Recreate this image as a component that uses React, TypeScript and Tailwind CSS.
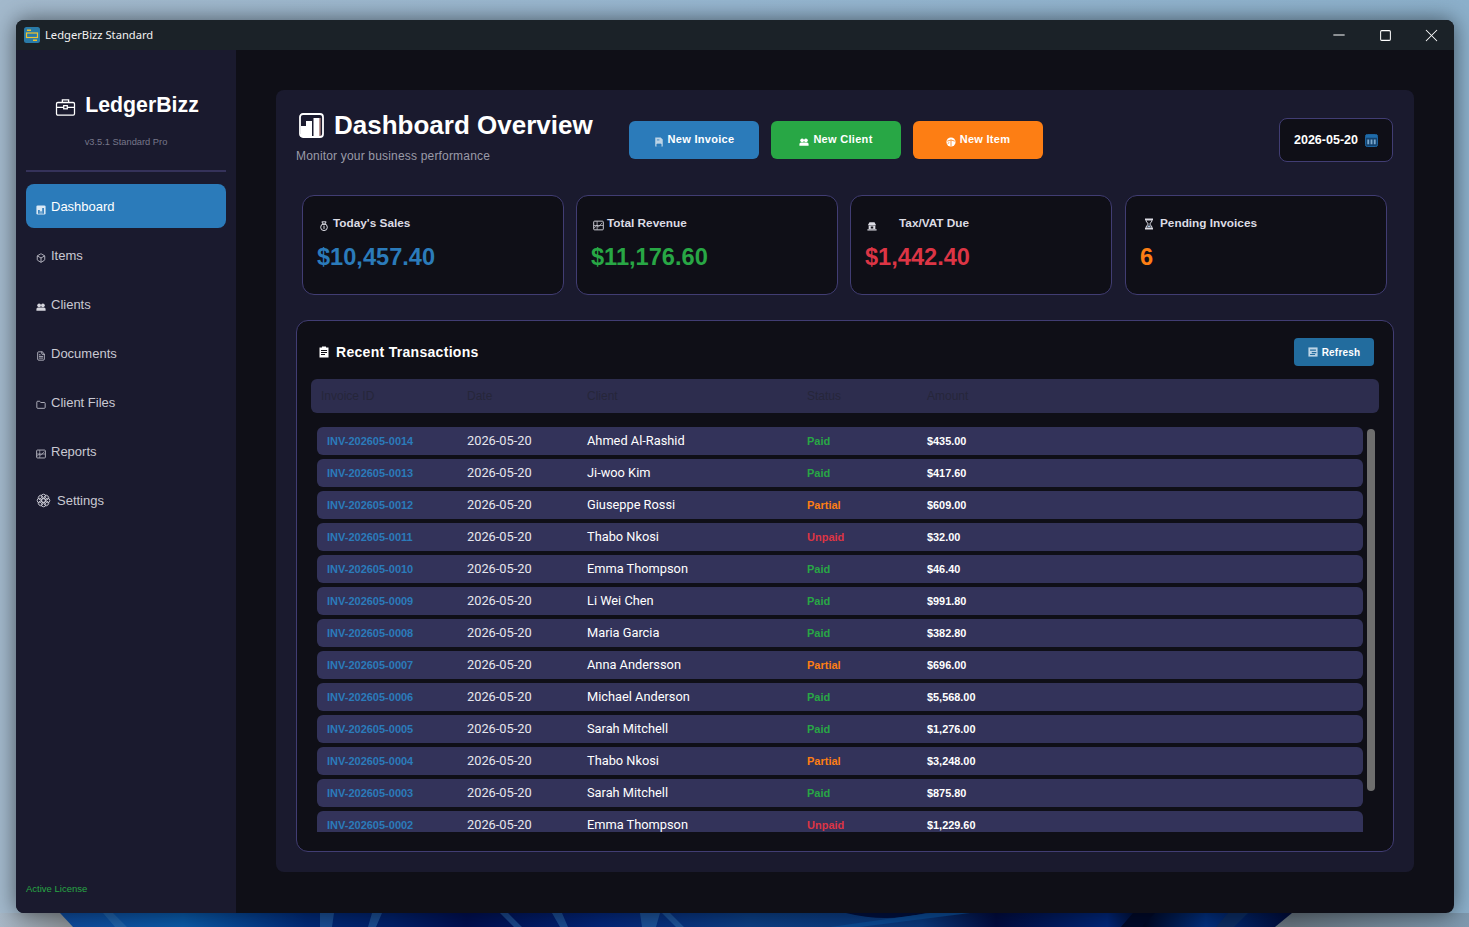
import { Box, FileText, Folder, Minus, Square, X } from "lucide-react";

const sans = "font-['Liberation_Sans',Arial,sans-serif]";
const ui = "font-['Roboto',sans-serif]";

const transactions = [
  ["INV-202605-0014", "Ahmed Al-Rashid", "Paid", "$435.00"],
  ["INV-202605-0013", "Ji-woo Kim", "Paid", "$417.60"],
  ["INV-202605-0012", "Giuseppe Rossi", "Partial", "$609.00"],
  ["INV-202605-0011", "Thabo Nkosi", "Unpaid", "$32.00"],
  ["INV-202605-0010", "Emma Thompson", "Paid", "$46.40"],
  ["INV-202605-0009", "Li Wei Chen", "Paid", "$991.80"],
  ["INV-202605-0008", "Maria Garcia", "Paid", "$382.80"],
  ["INV-202605-0007", "Anna Andersson", "Partial", "$696.00"],
  ["INV-202605-0006", "Michael Anderson", "Paid", "$5,568.00"],
  ["INV-202605-0005", "Sarah Mitchell", "Paid", "$1,276.00"],
  ["INV-202605-0004", "Thabo Nkosi", "Partial", "$3,248.00"],
  ["INV-202605-0003", "Sarah Mitchell", "Paid", "$875.80"],
  ["INV-202605-0002", "Emma Thompson", "Unpaid", "$1,229.60"],
];

const statusColor: Record<string, string> = {
  Paid: "text-[#28a745]",
  Partial: "text-[#fd7e14]",
  Unpaid: "text-[#dc3545]",
};

function BarsIcon({ className }: { className?: string }) {
  return (
    <svg viewBox="0 0 24 24" className={className}>
      <rect x="1" y="1" width="22" height="22" rx="3" fill="#dbe9f5" />
      <path d="M5 12h4v9H5zM10.5 15h3v6h-3zM15 7h4v14h-4z" fill="#2b7bba" />
    </svg>
  );
}

function TitleIcon() {
  return (
    <svg viewBox="0 0 25 25" className="h-[25px] w-[25px] shrink-0">
      <rect x="1" y="1" width="23" height="23" rx="3" fill="#1a1a2e" stroke="#fff" strokeWidth="1.8" />
      <path d="M2 13h5V8h6v15H2zM14.5 5h6v18h-6z" fill="#fff" />
      <path d="M20.5 5h1v18h-1z" fill="#e8a79a" />
    </svg>
  );
}

function Briefcase() {
  return (
    <svg viewBox="0 0 22 20" fill="none" stroke="#fff" strokeWidth="1.4" className="h-[18px] w-[21px]">
      <rect x="1" y="5" width="20" height="14" rx="1.5" />
      <path d="M7.5 5V2h7v3M1 10.5h20" />
      <rect x="9" y="8.5" width="4" height="3.5" fill="#1a1a2e" />
    </svg>
  );
}

function Flower() {
  const petals = [0, 45, 90, 135, 180, 225, 270, 315];
  return (
    <svg viewBox="0 0 24 24" fill="none" stroke="#c9c9d2" strokeWidth="1.5" className="h-[15px] w-[15px] shrink-0">
      <circle cx="12" cy="12" r="3.2" />
      {petals.map((a) => (
        <circle key={a} cx="12" cy="5.5" r="3.6" transform={`rotate(${a} 12 12)`} />
      ))}
    </svg>
  );
}

function ChartIcon({ className, stroke }: { className?: string; stroke: string }) {
  return (
    <svg viewBox="0 0 24 24" fill="none" stroke={stroke} strokeWidth="2" className={className}>
      <rect x="1.5" y="2.5" width="21" height="19" rx="2" />
      <path d="M2 18l6-6 4 3 8-9M2 12h20M9 3v18" strokeWidth="1.5" />
    </svg>
  );
}

function People({ className, fill }: { className?: string; fill: string }) {
  return (
    <svg viewBox="0 0 24 24" fill={fill} className={className}>
      <circle cx="7.5" cy="8" r="4.5" />
      <circle cx="16.5" cy="8" r="4.5" />
      <path d="M1 21v-4q0-4 4-4h14q4 0 4 4v4z" />
    </svg>
  );
}

function DocFilled({ className, fill, line }: { className?: string; fill: string; line: string }) {
  return (
    <svg viewBox="0 0 24 24" className={className}>
      <path d="M3 1h13l5 5v17H3z" fill={fill} />
      <path d="M7 7h6M7 17h10v6H7z" stroke={line} strokeWidth="2" fill={line} />
    </svg>
  );
}

function MoneyBag({ className }: { className?: string }) {
  return (
    <svg viewBox="0 0 24 24" fill="none" stroke="#dcdce4" strokeWidth="2.4" className={className}>
      <path d="M7 2h10l-3 6h-4z" />
      <circle cx="12" cy="15" r="8" />
      <path d="M12 11v8" />
    </svg>
  );
}

function Bank({ className }: { className?: string }) {
  return (
    <svg viewBox="0 0 24 24" fill="#dcdce4" className={className}>
      <path d="M6 3h12l4 7H2z" />
      <path d="M4 11h16v8H4z" />
      <path d="M1 20h22v3H1z" />
      <path d="M9 13h6v5H9z" fill="#0f0f17" />
    </svg>
  );
}

function HourglassSolid({ className }: { className?: string }) {
  return (
    <svg viewBox="0 0 20 24" className={className}>
      <path d="M2 1h16v3H2zM2 20h16v3H2z" fill="#dcdce4" />
      <path d="M4 4h12v2l-4.5 6 4.5 6v2H4v-2l4.5-6L4 6z" fill="none" stroke="#dcdce4" strokeWidth="2" />
      <path d="M6 18l4-4 4 4z" fill="#a9c4e0" />
    </svg>
  );
}

function Clipboard({ className }: { className?: string }) {
  return (
    <svg viewBox="0 0 24 24" className={className}>
      <path d="M3 3h18v20H3z" fill="#fff" />
      <path d="M8 1h8v4H8z" fill="#fff" />
      <path d="M6 8h12v2H6zM6 12h12v2H6zM6 16h8v2H6z" fill="#0f0f17" />
    </svg>
  );
}

function RefreshBox({ className }: { className?: string }) {
  return (
    <svg viewBox="0 0 24 24" className={className}>
      <rect x="1" y="1" width="22" height="22" fill="#bcd4e6" />
      <path d="M5 6h14v3H5zM9 12h11v3H9zM5 17h12v2H5z" fill="#226c9e" />
    </svg>
  );
}

function ItemBall({ className }: { className?: string }) {
  return (
    <svg viewBox="0 0 24 24" className={className}>
      <circle cx="12" cy="12" r="11" fill="#fff" />
      <path d="M3 10l9-3 9 3M12 7v15M8 13l-4 3" stroke="#fd7e14" strokeWidth="2" fill="none" />
    </svg>
  );
}

function CalendarSolid({ className }: { className?: string }) {
  return (
    <svg viewBox="0 0 14 14" className={className}>
      <rect x="0.5" y="0.5" width="13" height="13" rx="2" fill="#14426e" stroke="#1f6cab" />
      <path d="M1 1h12v3H1z" fill="#1f6cab" />
      <path d="M2.5 6h2v5h-2zM6 6h2v5H6zM9.5 6h2v5h-2z" fill="#7aa7cc" />
    </svg>
  );
}

function NavItem({ label, icon, active }: { label: string; icon: React.ReactNode; active?: boolean }) {
  return (
    <div
      className={`flex h-[44px] items-center rounded-[8px] pl-[10px] ${
        active ? "bg-[#2b7bba] text-white" : "text-[#c9c9d2]"
      }`}
    >
      {icon}
      <span className="ml-[5px] text-[13px] leading-none">{label}</span>
    </div>
  );
}

function Stat({
  label,
  value,
  color,
  icon,
  gap,
  extra = "",
}: {
  label: string;
  value: string;
  color: string;
  icon: React.ReactNode;
  gap: string;
  extra?: string;
}) {
  return (
    <div className={`h-[100px] rounded-[12px] border border-[#413d73] bg-[#0f0f17] pl-[14px] pt-[20px] ${extra}`}>
      <div className="flex h-[16px] items-center pl-[2px]">
        {icon}
        <span className={`${gap} text-[11.8px] font-bold text-[#dcdce4]`}>{label}</span>
      </div>
      <div className={`mt-[9px] text-[23.6px] font-bold leading-[32px] ${color}`}>{value}</div>
    </div>
  );
}

function ActionButton({ label, bg, icon }: { label: string; bg: string; icon: React.ReactNode }) {
  return (
    <div className={`flex h-[38px] w-[130px] items-center justify-center gap-[4px] rounded-[6px] ${bg}`}>
      {icon}
      <span className="mb-[1px] text-[11px] font-bold tracking-[0.3px] text-white">{label}</span>
    </div>
  );
}

export default function App() {
  return (
    <div className={`relative h-[927px] w-[1469px] overflow-hidden bg-[linear-gradient(90deg,#a3b9cc_0%,#96b6d0_50%,#8cb0cb_100%)] ${sans}`}>
      {/* wallpaper showing under the window */}
      <svg viewBox="0 0 1469 14" className="absolute bottom-0 left-0 h-[14px] w-[1469px]">
        <defs>
          <linearGradient id="base" x1="0" x2="1469" y1="0" y2="0" gradientUnits="userSpaceOnUse">
            <stop offset="0" stopColor="#a7b7c6" />
            <stop offset="0.045" stopColor="#8d949a" />
            <stop offset="0.88" stopColor="#66747f" />
            <stop offset="1" stopColor="#7f9ab0" />
          </linearGradient>
          <linearGradient id="wall" x1="60" x2="1292" y1="0" y2="0" gradientUnits="userSpaceOnUse">
            <stop offset="0" stopColor="#0e4a9c" />
            <stop offset="0.1" stopColor="#0a5aa8" />
            <stop offset="0.2" stopColor="#012a78" />
            <stop offset="0.27" stopColor="#01206a" />
            <stop offset="0.33" stopColor="#000f50" />
            <stop offset="0.44" stopColor="#03267a" />
            <stop offset="0.56" stopColor="#0c3f85" />
            <stop offset="0.7" stopColor="#0a387c" />
            <stop offset="0.76" stopColor="#020c40" />
            <stop offset="0.85" stopColor="#00277a" />
            <stop offset="0.88" stopColor="#000824" />
            <stop offset="0.93" stopColor="#023080" />
            <stop offset="1" stopColor="#010b38" />
          </linearGradient>
        </defs>
        <path d="M0 0h1469v14H0z" fill="url(#base)" />
        <path d="M60 0H1292L1275 14H73z" fill="url(#wall)" />
        <path d="M103 0h10l14 14h-12zM320 0h14l-2 14h-12zM372 0h10l-6 14h-8zM500 0h8l14 14h-8zM552 0h10l6 14h-8zM640 0h20l-4 14h-14zM662 0h8l14 14h-8z" fill="#2f6fae" opacity="0.55" />
        <path d="M846 0q40 10 80 0z" fill="#02103f" />
        <path d="M930 0h40L860 14h-30z" fill="#0b4a94" />
        <path d="M1133 0h22l-14 14h-20z" fill="#000a2a" />
        <path d="M1228 0h20l-14 14h-18z" fill="#0b2c63" />
      </svg>

      <div className="pl-[16px] pt-[20px]">
        <div className="relative flex h-[893px] w-[1438px] flex-col overflow-hidden rounded-[8px] bg-[#0f0f17] shadow-[0_0_22px_rgba(0,0,0,0.55)]">
          {/* title bar */}
          <div className="flex h-[30px] shrink-0 items-center bg-[#1b2228] pl-[8px]">
            <svg viewBox="0 0 16 16" className="h-[16px] w-[16px]">
              <rect width="16" height="16" rx="2.5" fill="#2a7ba8" />
              <path d="M3 2.5h4v1.5H3zM9 12.5h4V14H9z" fill="#f0c32e" />
              <rect x="2.5" y="6" width="11" height="4.5" fill="none" stroke="#f0c32e" strokeWidth="1.2" />
            </svg>
            <span className="ml-[5px] font-['Noto_Sans',sans-serif] text-[11.2px] text-[#f2f2f2]">LedgerBizz Standard</span>
            <div className="ml-auto flex h-full items-center text-white">
              <div className="flex w-[46px] justify-center"><Minus size={18} strokeWidth={1.33} /></div>
              <div className="flex w-[46px] justify-center"><Square size={13} strokeWidth={1.9} /></div>
              <div className="flex w-[46px] justify-center"><X size={21} strokeWidth={1.15} /></div>
            </div>
          </div>

          <div className="flex min-h-0 flex-1">
            {/* sidebar */}
            <aside className="flex w-[220px] shrink-0 flex-col bg-[#1a1a2e] px-[10px]">
              <div className="mt-[42px] flex h-[26px] items-center justify-center gap-[9px] pl-[2px]">
                <span className="mt-[4px]"><Briefcase /></span>
                <span className="mb-[-2px] text-[21.3px] font-bold leading-none text-white">LedgerBizz</span>
              </div>
              <div className="mt-[18px] text-center text-[9.3px] leading-[12px] text-[#77778a]">v3.5.1 Standard Pro</div>
              <div className="mt-[22px] h-[2px] bg-[#35325a]" />
              <nav className="mt-[12px] flex flex-col gap-[5px]">
                <NavItem active label="Dashboard" icon={<BarsIcon className="mt-[7px] h-[10px] w-[10px] shrink-0" />} />
                <NavItem label="Items" icon={<Box className="mt-[6px] h-[10px] w-[10px] shrink-0" strokeWidth={2} />} />
                <NavItem label="Clients" icon={<People fill="#d6d6de" className="mt-[6px] h-[10px] w-[10px] shrink-0" />} />
                <NavItem label="Documents" icon={<FileText className="mt-[6px] h-[10px] w-[10px] shrink-0" strokeWidth={2} />} />
                <NavItem label="Client Files" icon={<Folder className="mt-[6px] h-[10px] w-[10px] shrink-0" strokeWidth={2} />} />
                <NavItem label="Reports" icon={<ChartIcon stroke="#c9c9d2" className="mt-[6px] h-[10px] w-[10px] shrink-0" />} />
                <div className="flex h-[44px] items-center gap-[6px] pl-[10px] text-[#c9c9d2]">
                  <Flower />
                  <span className="text-[13px] leading-none">Settings</span>
                </div>
              </nav>
              <div className="mt-auto pb-[18px] text-[9.5px] leading-[12px] text-[#28a745]">Active License</div>
            </aside>

            {/* main */}
            <main className="min-w-0 flex-1 p-[40px]">
              <div className="h-[782px] w-[1138px] rounded-[8px] bg-[#1a1a2e] pl-[20px] pr-[20px] pt-[18px]">
                <div className="flex h-[87px] items-start">
                  <div className="w-[333px] shrink-0">
                    <div className="flex h-[34px] items-center gap-[10px] pl-[3px]">
                      <TitleIcon />
                      <h1 className="text-[26px] font-bold leading-none text-white">Dashboard Overview</h1>
                    </div>
                    <p className="mt-[6px] text-[12px] leading-[16px] tracking-[0.18px] text-[#9a9aa8]">Monitor your business performance</p>
                  </div>
                  <div className="mt-[13px] flex gap-[12px]">
                    <ActionButton label="New Invoice" bg="bg-[#2b7bba]" icon={<DocFilled fill="#bcd4e6" line="#2b7bba" className="mt-[3px] h-[10px] w-[10px]" />} />
                    <ActionButton label="New Client" bg="bg-[#28a745]" icon={<People fill="#ffffff" className="mt-[3px] h-[10px] w-[10px]" />} />
                    <ActionButton label="New Item" bg="bg-[#fd7e14]" icon={<ItemBall className="mt-[3px] h-[10px] w-[10px]" />} />
                  </div>
                  <div className="ml-auto mr-px mt-[10px] flex h-[44px] w-[114px] items-center justify-center gap-[7px] rounded-[8px] border border-[#413d73] bg-[#0f0f17]">
                    <span className="text-[12.5px] font-bold text-white">2026-05-20</span>
                    <CalendarSolid className="h-[13px] w-[13px]" />
                  </div>
                </div>

                <div className="ml-[6px] grid w-[1085px] grid-cols-[262px_262px_262px_263px] gap-3">
                  <Stat label="Today's Sales" value="$10,457.40" color="text-[#2b7bba]" gap="ml-[4px]" icon={<MoneyBag className="mt-[3px] h-[10px] w-[10px]" />} />
                  <Stat label="Total Revenue" value="$11,176.60" color="text-[#28a745]" gap="ml-[3px]" icon={<ChartIcon stroke="#dcdce4" className="mt-[3px] h-[11px] w-[11px]" />} />
                  <Stat label="Tax/VAT Due" value="$1,442.40" color="text-[#dc3545]" gap="ml-[22px]" icon={<Bank className="mt-[3px] h-[10px] w-[10px]" />} />
                  <Stat label="Pending Invoices" value="6" color="text-[#fd7e14]" gap="ml-[6px]" extra="ml-px" icon={<HourglassSolid className="ml-[2px] h-[12px] w-[10px]" />} />
                </div>

                {/* recent transactions */}
                <section className="mt-[25px] h-[532px] w-[1098px] overflow-hidden rounded-[12px] border border-[#413d73] bg-[#0f0f17] pt-[17px]">
                  <div className="flex h-[28px] items-center justify-between pl-[21px] pr-[19px]">
                    <div className="flex items-center gap-[6px]">
                      <Clipboard className="h-[12px] w-[12px]" />
                      <h2 className="text-[14px] font-bold tracking-[0.3px] text-white">Recent Transactions</h2>
                    </div>
                    <div className="flex h-[28px] w-[80px] items-center justify-center gap-[4px] rounded-[4px] bg-[#226c9e]">
                      <RefreshBox className="h-[10px] w-[10px]" />
                      <span className="text-[10px] font-bold tracking-[0.2px] text-white">Refresh</span>
                    </div>
                  </div>

                  <div className="mx-[14px] mt-[13px] flex h-[34px] items-center rounded-[6px] bg-[#2d2d4e] pl-[10px] text-[12px] text-[#26263a]">
                    <span className="w-[146px]">Invoice ID</span>
                    <span className="w-[120px]">Date</span>
                    <span className="w-[220px]">Client</span>
                    <span className="w-[120px]">Status</span>
                    <span>Amount</span>
                  </div>

                  <div className="ml-[20px] mt-[14px] flex h-[405px] gap-[4px] overflow-hidden">
                    <div className="flex w-[1046px] shrink-0 flex-col gap-[4px]">
                      {transactions.map(([id, client, status, amount]) => (
                        <div key={id} className="flex h-[28px] shrink-0 items-center rounded-[6px] bg-[#33335a] pl-[10px]">
                          <span className="w-[140px] text-[11px] font-bold text-[#2b7bba]">{id}</span>
                          <span className={`w-[120px] text-[12.8px] text-[#e6e6ee] ${ui}`}>2026-05-20</span>
                          <span className={`w-[220px] text-[12.8px] text-white ${ui}`}>{client}</span>
                          <span className={`w-[120px] text-[11px] font-bold ${statusColor[status]}`}>{status}</span>
                          <span className="text-[10.9px] font-bold text-white">{amount}</span>
                        </div>
                      ))}
                    </div>
                    <div className="mt-[2px] h-[362px] w-[8px] rounded-[4px] bg-[#6e6e6e]" />
                  </div>
                </section>
              </div>
            </main>
          </div>
        </div>
      </div>
    </div>
  );
}
